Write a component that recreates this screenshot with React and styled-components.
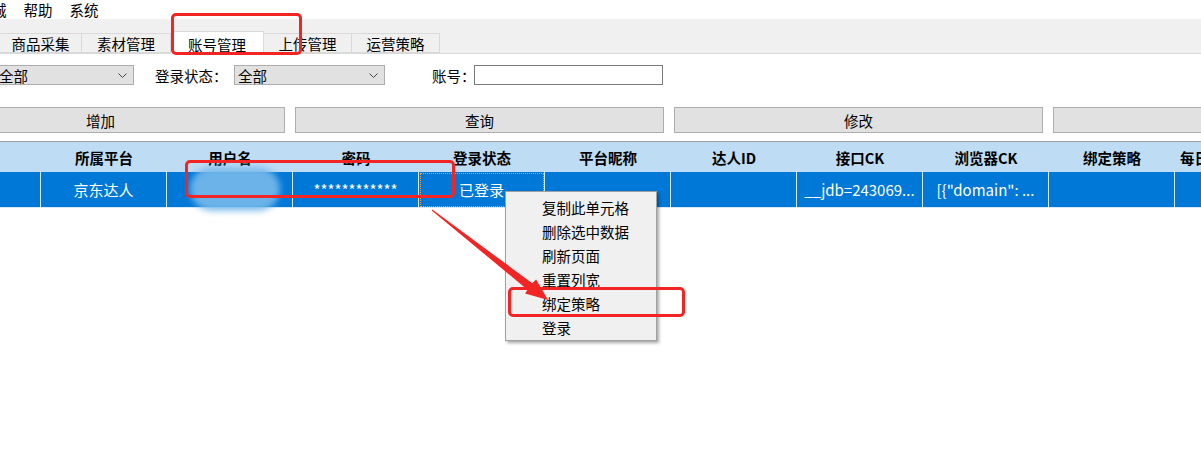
import React from "react";
import styled, { createGlobalStyle } from "styled-components";

const GlobalStyle = createGlobalStyle`
  html, body {
    margin: 0;
    padding: 0;
    background: #ffffff;
  }
  body {
    font-family: "Microsoft YaHei", "Noto Sans CJK SC", "Noto Sans", sans-serif;
    font-size: 14.5px;
    color: #000;
    overflow: hidden;
  }
`;

const Page = styled.div`
  position: relative;
  width: 1201px;
  height: 467px;
  overflow: hidden;
  background: #fff;
`;

const MenuBar = styled.div`
  display: flex;
  align-items: center;
  height: 19px;
  gap: 17px;
  line-height: 19px;
`;

const MenuItem = styled.span`
  margin-left: ${(p) => p.$offset || 0}px;
  white-space: nowrap;
`;

const TabStrip = styled.div`
  display: flex;
  align-items: flex-end;
  height: 34px;
  background: #f0f0f0;
  border-bottom: 1px solid #d9d9d9;
`;

const Tab = styled.div`
  box-sizing: border-box;
  width: ${(p) => p.$w}px;
  height: ${(p) => (p.$active ? 23 : 20)}px;
  margin-bottom: ${(p) => (p.$active ? -1 : 0)}px;
  display: flex;
  align-items: center;
  justify-content: center;
  background: ${(p) => (p.$active ? "#ffffff" : "#f0f0f0")};
  border: 1px solid #d9d9d9;
  border-left: none;
  border-bottom: ${(p) => (p.$active ? "none" : "1px solid #d9d9d9")};
  padding-top: ${(p) => (p.$active ? 2 : 0)}px;
`;

const FilterRow = styled.div`
  display: flex;
  align-items: center;
  height: 20px;
  margin-top: 11px;
`;

const Select = styled.div`
  box-sizing: border-box;
  display: flex;
  align-items: center;
  justify-content: space-between;
  width: ${(p) => p.$w}px;
  height: 20px;
  margin-left: ${(p) => p.$ml || 0}px;
  padding: 0 6px 0 3px;
  background: #e1e1e1;
  border: 1px solid #adadad;
`;

const Label = styled.span`
  margin-left: ${(p) => p.$ml || 0}px;
  width: ${(p) => (p.$w ? `${p.$w}px` : "auto")};
  white-space: nowrap;
`;

const TextInput = styled.div`
  box-sizing: border-box;
  width: 189px;
  height: 20px;
  background: #fff;
  border: 1px solid #7a7a7a;
`;

const ButtonRow = styled.div`
  display: flex;
  gap: 10px;
  margin-top: 22px;
  margin-left: -84px;
`;

const Button = styled.div`
  box-sizing: border-box;
  flex: 0 0 369px;
  height: 26px;
  display: flex;
  align-items: center;
  justify-content: center;
  background: #e1e1e1;
  border: 1px solid #adadad;
`;

const Grid = styled.div`
  margin-top: 8px;
  border-top: 1px solid #a0a0a0;
`;

const GridRow = styled.div`
  display: grid;
  grid-template-columns: 41px repeat(10, 126px);
  height: ${(p) => (p.$header ? 30 : 36)}px;
  background: ${(p) => (p.$header ? "#bedcf4" : "#0078d7")};
  color: ${(p) => (p.$header ? "#000" : "#fff")};
  font-weight: ${(p) => (p.$header ? 700 : 400)};
`;

const Cell = styled.div`
  box-sizing: border-box;
  display: flex;
  align-items: center;
  justify-content: ${(p) => (p.$overflow ? "flex-start" : "center")};
  padding-left: ${(p) => (p.$overflow ? 5 : 0)}px;
  white-space: nowrap;
  overflow: hidden;
  font-size: ${(p) => (p.$header ? 14.5 : 15)}px;
  border-right: ${(p) => (p.$header ? "none" : "1px solid #d8e8f6")};
  border-bottom: ${(p) => (p.$header ? "none" : "1px solid #d8e8f6")};
  outline: ${(p) => (p.$focus ? "1px dotted #f0a050" : "none")};
  outline-offset: -2px;
`;

const ContextMenu = styled.div`
  position: absolute;
  left: 505px;
  top: 191px;
  box-sizing: border-box;
  width: 152px;
  height: 150px;
  padding-top: 3px;
  background: #f0f0f0;
  border: 1px solid #a0a0a0;
  box-shadow: 2px 2px 3px rgba(0, 0, 0, 0.35);
`;

const ContextItem = styled.div`
  height: 24px;
  display: flex;
  align-items: center;
  padding-left: 36px;
  font-size: 14.5px;
  color: #000;
`;

const Blur = styled.div`
  position: absolute;
  left: 190px;
  top: 167px;
  width: 90px;
  height: 44px;
  border-radius: 22px;
  background: rgba(120, 185, 235, 0.9);
  filter: blur(3px);
`;

const Highlight = styled.div`
  position: absolute;
  left: ${(p) => p.$x}px;
  top: ${(p) => p.$y}px;
  width: ${(p) => p.$w}px;
  height: ${(p) => p.$h}px;
  box-sizing: border-box;
  border: 3px solid #f22424;
  border-radius: 5px;
`;

const Overlay = styled.svg`
  position: absolute;
  left: 0;
  top: 0;
  pointer-events: none;
`;

const Chevron = () => (
  <svg width="9" height="5" viewBox="0 0 9 5">
    <polyline points="0.5,0.5 4.5,4.5 8.5,0.5" fill="none" stroke="#444" strokeWidth="1" />
  </svg>
);

const tabs = [
  { label: "商品采集", w: 82 },
  { label: "素材管理", w: 89 },
  { label: "账号管理", w: 93, active: true },
  { label: "上传管理", w: 88 },
  { label: "运营策略", w: 88 },
];

const columns = ["", "所属平台", "用户名", "密码", "登录状态", "平台昵称", "达人ID", "接口CK", "浏览器CK", "绑定策略", "每日上传上限"];
const row = ["", "京东达人", "", "************", "已登录", "", "", "__jdb=243069...", "[{\"domain\": ...", "", ""];

const menuItems = ["复制此单元格", "删除选中数据", "刷新页面", "重置列宽", "绑定策略", "登录"];

export default function App() {
  return (
    <Page>
      <GlobalStyle />
      <MenuBar>
        <MenuItem $offset={-8}>城</MenuItem>
        <MenuItem>帮助</MenuItem>
        <MenuItem>系统</MenuItem>
      </MenuBar>
      <TabStrip>
        {tabs.map((t) => (
          <Tab key={t.label} $w={t.w} $active={t.active}>
            {t.label}
          </Tab>
        ))}
      </TabStrip>
      <FilterRow>
        <Select $w={139} $ml={-5}>
          <span>全部</span>
          <Chevron />
        </Select>
        <Label $ml={21} $w={79}>登录状态：</Label>
        <Select $w={151}>
          <span>全部</span>
          <Chevron />
        </Select>
        <Label $ml={47} $w={42}>账号：</Label>
        <TextInput />
      </FilterRow>
      <ButtonRow>
        <Button>增加</Button>
        <Button>查询</Button>
        <Button>修改</Button>
        <Button />
      </ButtonRow>
      <Grid>
        <GridRow $header>
          {columns.map((c, i) => (
            <Cell key={i} $header $overflow={i === columns.length - 1}>
              {c}
            </Cell>
          ))}
        </GridRow>
        <GridRow>
          {row.map((c, i) => (
            <Cell key={i} $focus={i === 4}>
              {c}
            </Cell>
          ))}
        </GridRow>
      </Grid>

      <Blur />
      <Highlight $x={171} $y={13} $w={131} $h={42} />
      <Highlight $x={185} $y={160} $w={270} $h={38} />

      <ContextMenu>
        {menuItems.map((m) => (
          <ContextItem key={m}>{m}</ContextItem>
        ))}
      </ContextMenu>

      <Highlight $x={508} $y={287} $w={177} $h={30} />
      <Overlay width="1201" height="467">
        <polygon
          points="431.7,210.4 527.5,289.7 525.1,293.6 548,300 536.1,279.4 532.3,283.3 432.3,209.6"
          fill="#f22424"
        />
      </Overlay>
    </Page>
  );
}
